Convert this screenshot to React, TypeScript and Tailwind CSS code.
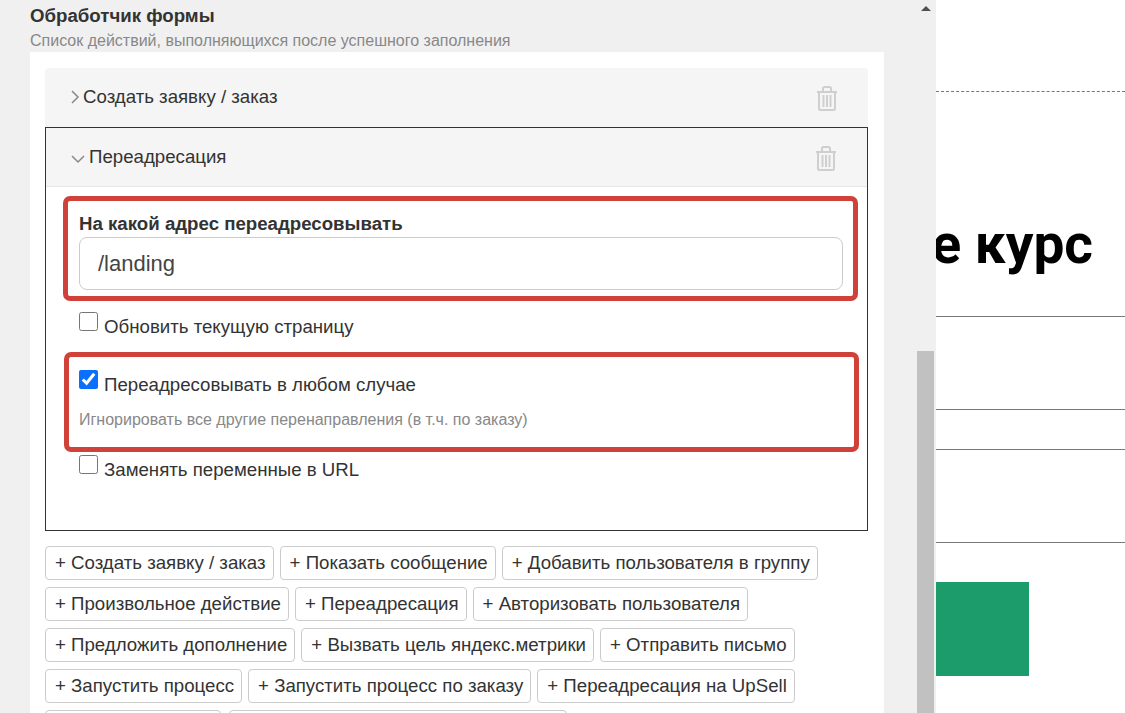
import React from 'react';

const buttonRows = [
  ['+ Создать заявку / заказ', '+ Показать сообщение', '+ Добавить пользователя в группу'],
  ['+ Произвольное действие', '+ Переадресация', '+ Авторизовать пользователя'],
  ['+ Предложить дополнение', '+ Вызвать цель яндекс.метрики', '+ Отправить письмо'],
  ['+ Запустить процесс', '+ Запустить процесс по заказу', '+ Переадресация на UpSell'],
];

const Trash = () => (
  <svg width="22" height="25" viewBox="0 0 22 25" fill="none" stroke="#cfcfcf" strokeWidth="2">
    <path d="M1 6h20" />
    <path d="M7 5V2.500Q7 1 8.500 1h5Q15 1 15 2.500V5" />
    <path d="M3 6v16.500Q3 24 4.500 24h13q1.500 0 1.500-1.500V6" />
    <path d="M7.500 9v12M11 9v12M14.500 9v12" />
  </svg>
);

const Check = ({ label, checked }: { label: string; checked?: boolean }) => (
  <label className="flex items-start gap-[6px] text-[18.67px] leading-[24px] text-[#333]">
    <input type="checkbox" defaultChecked={checked} className="w-[19px] h-[19px] m-0 accent-[#0b6ffd]" />
    <span className="mt-[3px]">{label}</span>
  </label>
);

export default function App() {
  return (
    <div className="flex h-[713px] w-[1125px] overflow-hidden bg-white font-['Liberation_Sans',Arial,sans-serif]">
      {/* панель настроек */}
      <div className="flex w-[936px] shrink-0 bg-[#f0f0f0]">
        <div className="w-[917px] h-[713px] overflow-hidden pl-[30px] pr-[33px] pt-[5px]">
          <div className="text-[18.67px] leading-[21px] font-bold text-[#333]">Обработчик формы</div>
          <div className="mt-[5px] text-[16px] leading-[20px] text-[#888]">
            Список действий, выполняющихся после успешного заполнения
          </div>

          <div className="mt-[1px] bg-white pl-[15px] pr-[16px] pt-[16px] pb-[20px]">
            <div className="flex h-[59px] items-center justify-between rounded-t-[4px] bg-[#f5f5f5] pl-[25px] pr-[30px]">
              <div className="mb-[2px] flex items-center text-[18.67px] text-[#333]">
                <svg width="13" height="14" viewBox="0 0 13 14" fill="none" stroke="#888" strokeWidth="1.500" className="-ml-[1px]">
                  <path d="M3 1l6 6-6 6" />
                </svg>
                <span className="ml-[1px]">Создать заявку / заказ</span>
              </div>
              <div className="mt-[1px]"><Trash /></div>
            </div>

            <div className="h-[404px] border border-[#333]">
              <div className="flex h-[59px] items-center justify-between border-b border-[#e5e5e5] bg-[#f5f5f5] pl-[25px] pr-[30px]">
                <div className="flex items-center text-[18.67px] text-[#333]">
                  <svg width="14" height="10" viewBox="0 0 14 10" fill="none" stroke="#888" strokeWidth="1.500" className="mt-[4px]">
                    <path d="M1 2l6 6 6-6" />
                  </svg>
                  <span className="ml-[4px]">Переадресация</span>
                </div>
                <div className="mt-[3px]"><Trash /></div>
              </div>

              <div className="pl-[17px] pr-[9px] pt-[9px]">
                <div className="h-[105px] rounded-[7px] border-[5px] border-[#d0413a] px-[11px] pt-[12px]">
                  <div className="text-[18.67px] leading-[21px] font-bold text-[#333]">На какой адрес переадресовывать</div>
                  <input
                    readOnly
                    value="/landing"
                    className="mt-[3px] block h-[53px] w-[764px] rounded-[8px] border border-[#ccc] bg-white px-[18px] text-[22px] text-[#444] outline-none"
                  />
                </div>

                <div className="mt-[11px] pl-[16px]"><Check label="Обновить текущую страницу" /></div>

                <div className="ml-[1px] -mr-[1px] mt-[13px] h-[100px] rounded-[7px] border-[5px] border-[#d0413a] px-[10px] pt-[13px]">
                  <Check label="Переадресовывать в любом случае" checked />
                  <div className="mt-[13px] text-[16px] leading-[20px] text-[#888]">
                    Игнорировать все другие перенаправления (в т.ч. по заказу)
                  </div>
                </div>

                <div className="mt-[3px] pl-[16px]"><Check label="Заменять переменные в URL" /></div>
              </div>
            </div>

            <div className="mt-[15px] flex flex-col gap-[7px]">
              {buttonRows.map((row, i) => (
                <div key={i} className="flex gap-[6px]">
                  {row.map(b => (
                    <div key={b} className="flex h-[34px] items-center whitespace-nowrap rounded-[4px] border border-[#ccc] bg-white pl-[9px] pr-[7px] text-[18.67px] text-[#333]">
                      {b}
                    </div>
                  ))}
                </div>
              ))}
              <div className="flex gap-[8px]">
                <div className="h-[34px] w-[176px] rounded-[4px] border border-[#ccc] bg-white" />
                <div className="h-[34px] w-[338px] rounded-[4px] border border-[#ccc] bg-white" />
              </div>
            </div>
          </div>
        </div>

        {/* полоса прокрутки */}
        <div className="flex h-[713px] w-[17px] flex-col items-center">
          <svg width="10" height="5" viewBox="0 0 10 5" className="mt-[6px]"><path d="M5 0l5 5H0z" fill="#505050" /></svg>
          <div className="mt-auto h-[362px] w-[17px] bg-[#c1c1c1]" />
        </div>
      </div>

      {/* страница за панелью */}
      <div className="w-[189px] shrink-0 overflow-hidden">
        <div className="h-[92px] border-b border-dashed border-[#777]" />
        <div className="flex h-[225px] items-start justify-end border-b border-[#777] pr-[32px] pt-[122px]">
          <span className="whitespace-nowrap font-['Roboto',sans-serif] text-[55px] leading-[60px] font-bold text-black">е курс</span>
        </div>
        <div className="h-[93px] border-b border-[#777]" />
        <div className="h-[40px] border-b border-[#777]" />
        <div className="h-[93px] border-b border-[#777]" />
        <div className="mt-[39px] h-[94px] w-[93px] bg-[#1b9c6a]" />
      </div>
    </div>
  );
}
